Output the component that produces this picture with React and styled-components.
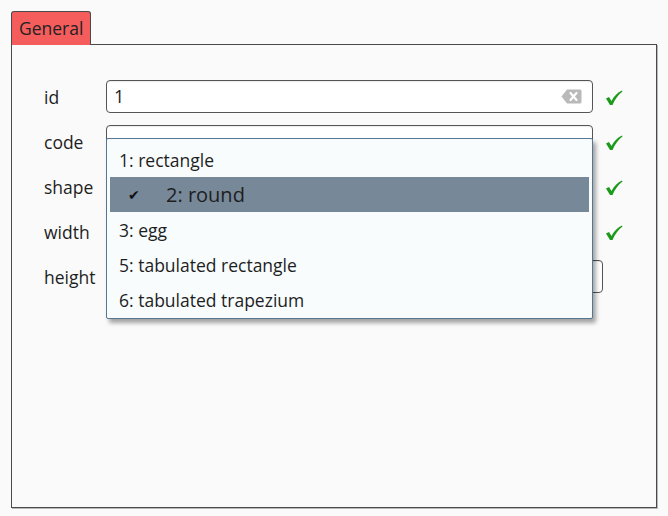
import React from 'react';
import styled, { createGlobalStyle } from 'styled-components';

const fields = [
  { name: 'id', value: '1', clear: true, ok: true },
  { name: 'code', value: '', ok: true, open: true },
  { name: 'shape', value: '', ok: true },
  { name: 'width', value: '', ok: true },
  { name: 'height', value: '', wide: true },
];

const options = [
  { id: 1, text: 'rectangle' },
  { id: 2, text: 'round', selected: true },
  { id: 3, text: 'egg' },
  { id: 5, text: 'tabulated rectangle' },
  { id: 6, text: 'tabulated trapezium' },
];

const ClearIcon = () => (
  <svg width="21" height="15" viewBox="0 0 21 15">
    <path d="M6 0.5 H19 a1.5 1.5 0 0 1 1.5 1.5 V13 a1.5 1.5 0 0 1 -1.5 1.5 H6 L0.5 7.5 Z" fill="#b9b9b9" />
    <path d="M9.5 4 L15.5 11 M15.5 4 L9.5 11" stroke="#fff" strokeWidth="2.2" strokeLinecap="round" />
  </svg>
);

const OkIcon = () => (
  <svg width="18" height="16" viewBox="0 0 18 16">
    <path d="M1 8.5 L4 7 L6.5 11 C9 6 12.5 2.5 17 0.5 L17.5 1.5 C13.5 4.5 10 9 7.5 15 L5 15 Z" fill="#1c9a1c" />
  </svg>
);

export default function App() {
  return (
    <>
      <Global />
      <Page>
        <Tab>General</Tab>
        <Panel>
          <Form>
            {fields.map(f => (
              <Row key={f.name}>
                <Label>{f.name}</Label>
                <Field $wide={f.wide}>
                  <Input>{f.value}</Input>
                  {f.clear && (
                    <Clear>
                      <ClearIcon />
                    </Clear>
                  )}
                  {f.open && (
                    <Menu>
                      {options.map(o => (
                        <Item key={o.id} $selected={o.selected}>
                          {o.selected && <Tick>✔</Tick>}
                          {o.id}: {o.text}
                        </Item>
                      ))}
                    </Menu>
                  )}
                </Field>
                {f.ok && (
                  <Ok>
                    <OkIcon />
                  </Ok>
                )}
              </Row>
            ))}
          </Form>
        </Panel>
      </Page>
    </>
  );
}

const Global = createGlobalStyle`
  body {
    margin: 0;
    background: #fafafa;
    font-family: "Open Sans", "Noto Sans", sans-serif;
    color: #1e1e1e;
  }
`;

const Page = styled.div`
  padding: 11px 11px 8px 11px;
  width: 646px;
`;

const Tab = styled.div`
  display: inline-block;
  box-sizing: border-box;
  width: 80px;
  height: 34px;
  margin-bottom: -1px;
  position: relative;
  background: #f55d5d;
  border: 1px solid #4a4a4a;
  border-bottom: none;
  border-radius: 3px 3px 0 0;
  padding: 4px 0 0 7px;
  font-size: 17.5px;
  line-height: 24px;
  color: #222;
`;

const Panel = styled.div`
  box-sizing: border-box;
  height: 464px;
  border: 1px solid #4a4a4a;
  box-shadow: 1px 1px 0 #b8b8b8;
  padding: 35px 0 0 32px;
`;

const Form = styled.div`
  display: flex;
  flex-direction: column;
  gap: 12px;
`;

const Row = styled.div`
  display: flex;
  align-items: center;
  height: 33px;
`;

const Label = styled.div`
  width: 62px;
  font-size: 17.5px;
  line-height: 24px;
  padding-top: 1px;
`;

const Field = styled.div`
  position: relative;
  width: ${p => (p.$wide ? '497px' : '487px')};
  height: 33px;
`;

const Input = styled.div`
  box-sizing: border-box;
  height: 100%;
  background: #fff;
  border: 1px solid #555;
  border-radius: 4px;
  box-shadow: inset 0 1px 1px rgba(0, 0, 0, 0.08);
  padding: 3px 7px;
  font-size: 18px;
  line-height: 25px;
`;

const Clear = styled.div`
  position: absolute;
  right: 11px;
  top: 9px;
  line-height: 0;
`;

const Ok = styled.div`
  margin-left: 12px;
  margin-top: 2px;
  line-height: 0;
`;

const Menu = styled.div`
  position: absolute;
  top: 13px;
  left: 0;
  width: 487px;
  box-sizing: border-box;
  z-index: 2;
  background: #f8fcfd;
  border: 1px solid #57768f;
  border-radius: 2px;
  box-shadow: 3px 4px 4px rgba(0, 0, 0, 0.35);
  padding: 3px 3px 1px 3px;
`;

const Item = styled.div`
  display: flex;
  align-items: center;
  height: 35px;
  padding-left: ${p => (p.$selected ? '18px' : '9px')};
  background: ${p => (p.$selected ? '#778899' : 'transparent')};
  font-size: ${p => (p.$selected ? '20px' : '17.5px')};
  color: #1e1e1e;
  white-space: pre;
`;

const Tick = styled.span`
  width: 38px;
  font-size: 14px;
  color: #111;
`;
